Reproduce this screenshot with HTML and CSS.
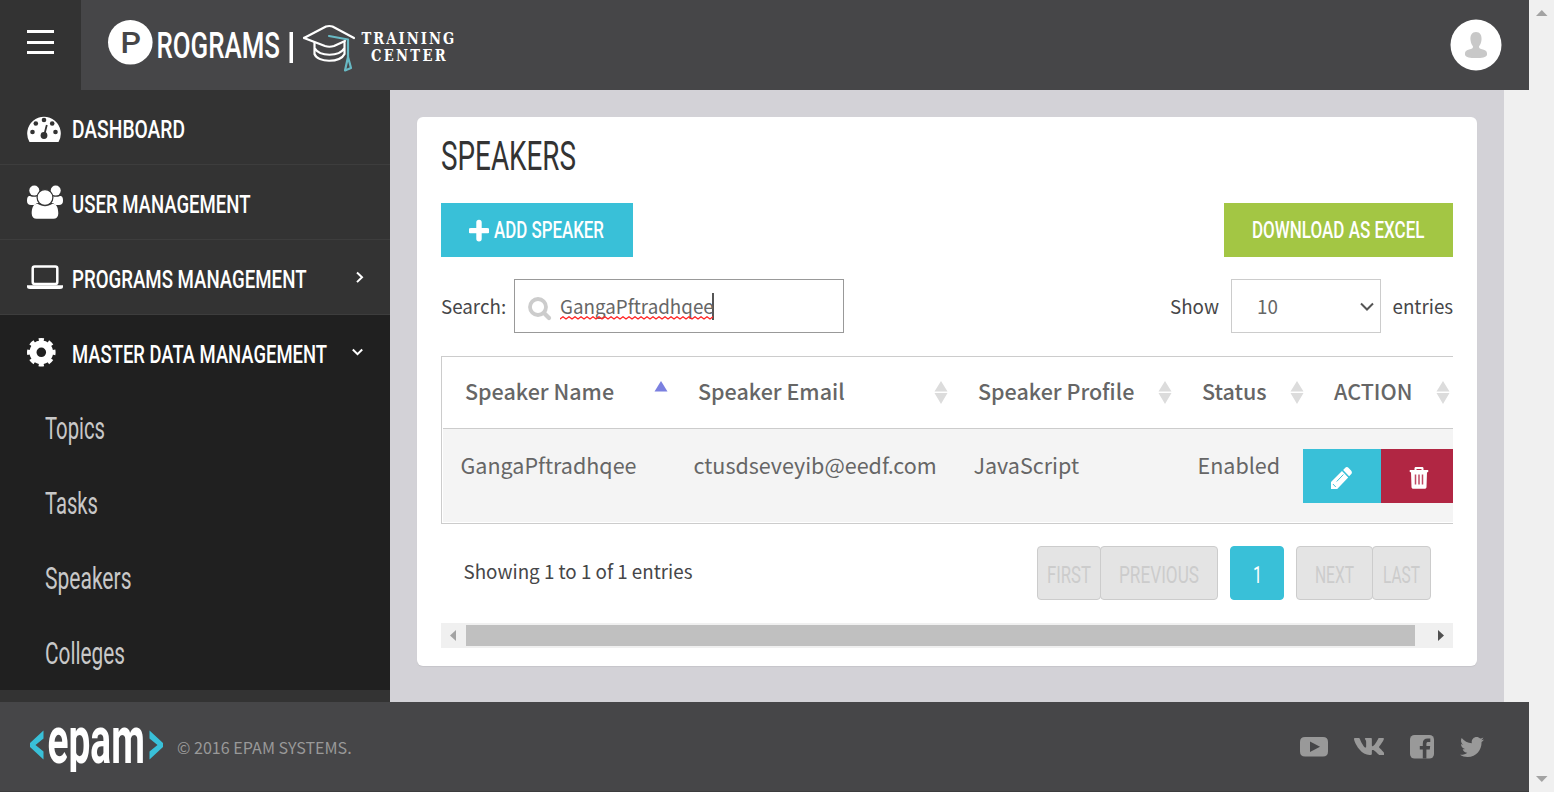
FILE: index.html
```html
<!DOCTYPE html>
<html lang="en">
<head>
<meta charset="utf-8">
<title>Speakers</title>
<link rel="stylesheet" href="styles.css">
</head>
<body>
<div class="page">
  <div class="app">
    <header class="header">
      <button class="burger" aria-label="Menu"><i></i><i></i><i></i></button>
      <svg class="brand" width="360" height="90">
        <circle cx="22.3" cy="42.3" r="22.3" fill="#fff"/>
        <text class="brand-p" x="12.500" y="53" textLength="20.500" lengthAdjust="spacingAndGlyphs">P</text>
        <text class="cond brand-name" x="48.500" y="57.800" textLength="123.500" lengthAdjust="spacingAndGlyphs">ROGRAMS</text>
        <rect x="181.500" y="32" width="3.500" height="31" fill="#fff"/>
        <g fill="none" stroke="#fff" stroke-width="2.200" stroke-linejoin="round" stroke-linecap="round">
          <path d="M196 38 L218 26.500 Q221.300 25.500 224.500 26.500 L246 38 M196 38 L217 46 Q221.300 47.500 226 46 L237 41"/>
          <path d="M206.500 42.500 V54 C210 63 232 63 236.500 54 V42.500 M206.500 48 C212 57 231 57 236.500 48"/>
          <path stroke="#68b9c4" d="M221 36 L240 39.500 V57 L237 70.500 L243 68 L240 57"/>
        </g>
        <text class="slab" transform="translate(253.500 44) scale(.82 1)" textLength="113" lengthAdjust="spacing">TRAINING</text>
        <text class="slab" transform="translate(263 61) scale(.82 1)" textLength="91" lengthAdjust="spacing">CENTER</text>
      </svg>
      <svg class="avatar" width="52" height="52" viewBox="0 0 52 52"><circle cx="26" cy="26" r="25.500" fill="#fff"/><path fill="#c8c8c8" d="M26 13c4 0 6 3 5.500 8-.4 3.500-1.500 5-2.500 6.500 0 2 1 2.500 4 3 3 .6 4.500 2.500 4 5.500-1 2.500-5 3-11 3s-10-.5-11-3c-.5-3 1-4.900 4-5.500 3-.5 4-1 4-3-1-1.500-2.100-3-2.500-6.500-.5-5 1.500-8 5.500-8z"/></svg>
    </header>

    <div class="middle">
      <nav class="sidebar">
        <a class="item">
          <svg class="icon" width="45" height="75"><path fill="#fff" d="M2.500 52 A16.800 16.800 0 1 1 31.500 52 Z"/><g fill="#333"><circle cx="5.500" cy="42" r="2.300"/><circle cx="8.800" cy="33.500" r="2.300"/><circle cx="17" cy="30" r="2.300"/><circle cx="25.200" cy="33.500" r="2.300"/><circle cx="28.500" cy="42" r="2.300"/><circle cx="17" cy="45.500" r="3.400"/></g><path d="M17.200 45 L19.800 35" stroke="#333" stroke-width="1.800"/></svg>
          <svg class="cond" width="113" height="75"><text y="48" textLength="113" lengthAdjust="spacingAndGlyphs">DASHBOARD</text></svg>
        </a>
        <a class="item">
          <svg class="icon" width="45" height="75" fill="#fff"><circle cx="7.300" cy="25.600" r="5"/><circle cx="28.700" cy="25.600" r="5"/><path d="M0 36c0-4 1-5 3-5 2 1 5 1 7 .5 0 3 1 4.500 2 6-2 .5-3.500 1.500-4.500 2.500H4c-2.500 0-4-1.500-4-4zM36 36c0-4-1-5-3-5-2 1-5 1-7 .5 0 3-1 4.500-2 6 2 .5 3.500 1.500 4.500 2.500H32c2.500 0 4-1.500 4-4z"/><circle cx="18" cy="32.500" r="7.900" stroke="#333" stroke-width="1.200"/><path d="M10.500 38.700c5 3.300 10 3.300 15 0 4.500 0 5.800 4.800 5.800 9.800 0 3.500-2 5.200-5 5.200H9.700c-3 0-5-1.700-5-5.200 0-5 1.300-9.800 5.800-9.800z"/></svg>
          <svg class="cond" width="178" height="75"><text y="48" textLength="178.500" lengthAdjust="spacingAndGlyphs">USER MANAGEMENT</text></svg>
        </a>
        <a class="item">
          <svg class="icon" width="45" height="75"><rect x="5.700" y="26.400" width="24.600" height="17.500" rx="2" fill="none" stroke="#fff" stroke-width="2.500"/><path fill="#fff" d="M0 45.300h36v1.500c0 1.500-1 2.200-3 2.200H3c-2 0-3-.7-3-2.200z"/></svg>
          <svg class="cond" width="234" height="75"><text y="48" textLength="234.500" lengthAdjust="spacingAndGlyphs">PROGRAMS MANAGEMENT</text></svg>
          <svg class="caret" width="12" height="75"><path d="M5 32.500l5 4.800-5 4.800"/></svg>
        </a>
        <div class="group">
          <a class="item open">
            <svg class="icon" width="45" height="75"><circle cx="14.300" cy="37.300" r="8.300" fill="none" stroke="#fff" stroke-width="7"/><circle cx="14.300" cy="37.300" r="12.300" fill="none" stroke="#fff" stroke-width="4" pathLength="16" stroke-dasharray="1.050 .95" stroke-dashoffset=".520"/></svg>
            <svg class="cond" width="254" height="75"><text y="48" textLength="255" lengthAdjust="spacingAndGlyphs">MASTER DATA MANAGEMENT</text></svg>
            <svg class="caret" width="12" height="75"><path d="M.8 34.500l4.700 4.700 4.700-4.700"/></svg>
          </a>
          <a class="sub"><svg class="cond" width="60" height="75"><text y="48.500" textLength="60" lengthAdjust="spacingAndGlyphs">Topics</text></svg></a>
          <a class="sub"><svg class="cond" width="53" height="75"><text y="48.500" textLength="53" lengthAdjust="spacingAndGlyphs">Tasks</text></svg></a>
          <a class="sub"><svg class="cond" width="87" height="75"><text y="48.500" textLength="86.500" lengthAdjust="spacingAndGlyphs">Speakers</text></svg></a>
          <a class="sub"><svg class="cond" width="80" height="75"><text y="48.500" textLength="80" lengthAdjust="spacingAndGlyphs">Colleges</text></svg></a>
        </div>
      </nav>

      <main class="main">
        <section class="card">
          <h1 class="title"><svg class="cond" width="135" height="62"><text y="29.400" textLength="135" lengthAdjust="spacingAndGlyphs">SPEAKERS</text></svg></h1>
          <div class="row">
            <button class="btn teal">
              <svg width="20" height="54"><path d="M10 19v18M1 28h18" stroke="#fff" stroke-width="6" stroke-linecap="round" transform="translate(1 2.400) scale(.9)"/></svg>
              <svg class="cond" width="110" height="54"><text y="35" textLength="110" lengthAdjust="spacingAndGlyphs">ADD SPEAKER</text></svg>
            </button>
            <button class="btn green"><svg class="cond" width="172" height="54"><text y="35" textLength="172.500" lengthAdjust="spacingAndGlyphs">DOWNLOAD AS EXCEL</text></svg></button>
          </div>
          <div class="row filters">
            <div class="field"><span class="lbl-search">Search:</span>
              <div class="search">
                <svg class="glass" width="24" height="24"><circle cx="10" cy="10" r="8" fill="none" stroke="#ccc" stroke-width="3.800"/><path d="M16 16l5 5" stroke="#ccc" stroke-width="4.200" stroke-linecap="round"/></svg>
                <span class="typed">GangaPftradhqee<svg class="squiggle" width="153" height="4"><defs><pattern id="wave" width="6" height="4" patternUnits="userSpaceOnUse"><path d="M-1.500 1l1.500 2 3-2.200 3 2.200 1.500-2" fill="none" stroke="#f22" stroke-width="1.400"/></pattern></defs><rect width="153" height="4" fill="url(#wave)"/></svg></span><i class="cursor"></i>
              </div>
            </div>
            <div class="field"><span class="lbl-show">Show</span>
              <div class="select"><span>10</span><svg width="14" height="9"><path d="M1 1.500l6 6 6-6" fill="none" stroke="#555" stroke-width="2"/></svg></div>
              <span class="lbl-entries">entries</span>
            </div>
          </div>
          <div class="grid">
            <div class="cells head">
              <div class="th"><span>Speaker Name</span><svg width="14" height="24"><path fill="#7b80e0" d="M7 1l6.500 10.500H.5z"/></svg></div>
              <div class="th"><span>Speaker Email</span><svg width="14" height="24"><path fill="#dcdcdc" d="M7 1l6.500 10.500H.5zM7 24L.5 13h13z"/></svg></div>
              <div class="th"><span>Speaker Profile</span><svg width="14" height="24"><path fill="#dcdcdc" d="M7 1l6.500 10.500H.5zM7 24L.5 13h13z"/></svg></div>
              <div class="th"><span>Status</span><svg width="14" height="24"><path fill="#dcdcdc" d="M7 1l6.500 10.500H.5zM7 24L.5 13h13z"/></svg></div>
              <div class="th"><span>ACTION</span><svg width="14" height="24"><path fill="#dcdcdc" d="M7 1l6.500 10.500H.5zM7 24L.5 13h13z"/></svg></div>
            </div>
            <div class="cells data">
              <div class="td"><span>GangaPftradhqee</span></div>
              <div class="td"><span>ctusdseveyib@eedf.com</span></div>
              <div class="td"><span>JavaScript</span></div>
              <div class="td"><span>Enabled</span></div>
              <div class="actions">
                <button class="edit" aria-label="Edit"><svg width="21" height="22" viewBox="0 0 22 22" preserveAspectRatio="none"><path fill="#fff" d="M0 22v-7L11.500 4l6.500 6.500L6.500 22zM12.700 3l2-2c1.200-1.200 2.600-1.200 3.800 0l2.500 2.500c1.200 1.200 1.200 2.600 0 3.800l-2 2z"/><path d="M2 17l3 3M6 14.500l7-7" stroke="#39c0d8" stroke-width="1"/></svg></button>
                <button class="del" aria-label="Delete"><svg width="20" height="22" viewBox="0 0 20 22"><path fill="#fff" d="M5.500 3V1.500C5.500.5 6 0 7 0h6c1 0 1.500.5 1.500 1.500V3h4.300c.8 0 .8 2.200 0 2.200H18L17.500 20c0 1-.8 1.800-2 1.800h-11c-1.200 0-2-.8-2-1.800L2 5.200h-.8C.4 5.200.4 3 1.200 3zM7.500 3h5V2h-5z"/><path d="M6.500 7.500v10M10 7.500v10M13.500 7.500v10" stroke="#c04a64" stroke-width="1.500"/></svg></button>
              </div>
            </div>
          </div>
          <div class="row foot">
            <span class="info">Showing 1 to 1 of 1 entries</span>
            <div class="pager">
              <span class="pg first"><svg class="cond" width="44" height="52"><text y="36" textLength="44" lengthAdjust="spacingAndGlyphs">FIRST</text></svg></span>
              <span class="pg prev"><svg class="cond" width="80" height="52"><text y="36" textLength="80" lengthAdjust="spacingAndGlyphs">PREVIOUS</text></svg></span>
              <span class="pg current"><svg class="cond" width="9" height="52"><text y="36" textLength="9" lengthAdjust="spacingAndGlyphs">1</text></svg></span>
              <span class="pg next"><svg class="cond" width="39" height="52"><text y="36" textLength="39" lengthAdjust="spacingAndGlyphs">NEXT</text></svg></span>
              <span class="pg last"><svg class="cond" width="37" height="52"><text y="36" textLength="37" lengthAdjust="spacingAndGlyphs">LAST</text></svg></span>
            </div>
          </div>
          <div class="hscroll">
            <svg width="25" height="25"><path fill="#a3a3a3" d="M15 7v11l-6-5.500z"/></svg>
            <div class="thumb"></div>
            <svg width="25" height="25"><path fill="#505050" d="M10 7v11l6-5.500z"/></svg>
          </div>
        </section>
      </main>
    </div>

    <footer class="footer">
      <svg class="epam" width="134" height="64"><path fill="#39c0d8" d="M13.500 4.500v8L5.500 19l8 6.500v8L0 21v-4zM119.500 4.500v8l8 6.500-8 6.500v8L133 21v-4z"/><text transform="translate(17.500 36.500) scale(.55 1)" textLength="177" lengthAdjust="spacingAndGlyphs">epam</text><rect y="46" width="134" height="18" fill="#464648"/></svg>
      <span class="copy">© 2016 EPAM SYSTEMS.</span>
      <div class="social">
        <svg width="28" height="20"><path fill="#999" fill-rule="evenodd" d="M5 0h18q5 0 5 5v9.500q0 5-5 5H5q-5 0-5-5V5q0-5 5-5zM10 4.500v10.500l10-5.200z"/></svg>
        <svg width="30" height="17" viewBox="18 96 530 320" preserveAspectRatio="none"><path fill="#999" d="M545 117.700c3.700-12.500 0-21.700-17.800-21.700h-58.900c-15 0-21.900 7.900-25.600 16.700 0 0-30 73.100-72.400 120.500-13.700 13.700-20 18.100-27.500 18.100-3.700 0-9.400-4.400-9.400-16.900V117.700c0-15-4.200-21.700-16.600-21.700h-92.600c-9.400 0-15 7-15 13.500 0 14.200 21.200 17.500 23.400 57.500v86.800c0 19-3.400 22.500-10.900 22.500-20 0-68.600-73.400-97.400-157.400-5.800-16.300-11.500-22.900-26.600-22.900H38.800c-16.800 0-20.200 7.900-20.200 16.700 0 15.600 20 93.100 93.100 195.500C160.400 378.100 229 416 291.400 416c37.500 0 42.100-8.400 42.100-22.900 0-66.800-3.400-73.100 15.400-73.100 8.700 0 23.700 4.400 58.700 38.100 40 40 46.600 57.900 69 57.900h58.900c16.800 0 25.300-8.400 20.400-25-11.200-34.900-86.900-106.700-90.300-111.500-8.700-11.200-6.200-16.200 0-26.200.1-.1 72-101.300 79.400-135.600z"/></svg>
        <svg width="24" height="24"><rect width="24" height="23.500" rx="4.500" fill="#999"/><path fill="#464648" d="M12.800 23.500V14.500H9.800V11h3V8.500c0-3.200 1.700-5 5-5h2.500v3.600h-2c-1.300 0-1.900.6-1.900 1.800V11h3.800l-.5 3.500h-3.300v9z"/></svg>
        <svg width="24" height="20" viewBox="0 48 512 416" preserveAspectRatio="none"><path fill="#999" d="M459.370 151.716c.325 4.548.325 9.097.325 13.645 0 138.720-105.583 298.558-298.558 298.558-59.452 0-114.680-17.219-161.137-47.106 8.447.974 16.568 1.299 25.340 1.299 49.055 0 94.213-16.568 130.274-44.832-46.132-.975-84.792-31.188-98.112-72.772 6.498.974 12.995 1.624 19.818 1.624 9.421 0 18.843-1.300 27.614-3.573-48.081-9.747-84.143-51.980-84.143-102.985v-1.299c13.969 7.797 30.214 12.670 47.431 13.319-28.264-18.843-46.781-51.005-46.781-87.391 0-19.492 5.197-37.360 14.294-52.954 51.655 63.675 129.300 105.258 216.365 109.807-1.624-7.797-2.599-15.918-2.599-24.040 0-57.828 46.782-104.934 104.934-104.934 30.213 0 57.502 12.670 76.670 33.137 23.715-4.548 46.456-13.320 66.599-25.340-7.798 24.366-24.366 44.833-46.132 57.827 21.117-2.273 41.584-8.122 60.426-16.243-14.292 20.791-32.161 39.308-52.628 54.253z"/></svg>
      </div>
    </footer>
  </div>
  <div class="vscroll">
    <svg width="25" height="25"><path fill="#a3a3a3" d="M7 16h11.500l-5.700-6z"/></svg>
    <svg width="25" height="25"><path fill="#a3a3a3" d="M7 9h11.500l-5.700 6z"/></svg>
  </div>
</div>
</body>
</html>
```
FILE: styles.css
```css
* { box-sizing: border-box; }
body { margin: 0; background: #f0f0f0; color: #464648; font-family: "Noto Sans CJK SC", "Noto Sans", sans-serif; font-size: 18.8px; overflow: hidden; }
svg { display: block; flex: none; }
button { border: 0; padding: 0; font: inherit; }
.page { display: flex; width: 1554px; height: 792px; }
.app { display: flex; flex-direction: column; width: 1529px; }
.vscroll { display: flex; flex-direction: column; justify-content: space-between; width: 25px; background: #f0f0f0; }

.cond, .cond text { font-family: Roboto, sans-serif; fill: currentColor; }
.cond { overflow: visible; }

.header { display: flex; height: 90px; background: #464648; color: #fff; }
.burger { width: 81px; background: #333; padding: 30px 27px; display: flex; flex-direction: column; gap: 7.5px; }
.burger i { height: 3px; background: #fff; flex: none; width: 27px; }
.brand { margin: 0 auto 0 27px; }
.brand-p { font: 500 30px Roboto, sans-serif; fill: #464648; }
.brand-name { font-size: 36.500px; font-weight: 500; }
.slab { font: 700 16px "DejaVu Serif", serif; fill: #fff; }
.avatar { margin: 19px 27px 0 0; }

.middle { display: flex; height: 612px; }
.sidebar { width: 390px; background: #333; color: #fff; }
.item { display: flex; height: 75px; padding-left: 27px; border-bottom: 1px solid #3d3d3d; font-size: 26.500px; font-weight: 500; }
.item.open { border-bottom: 0; }
.caret { margin: 0 26px 0 auto; fill: none; stroke: #fff; stroke-width: 2; }
.group { background: #202020; height: 375px; }
.sub { display: flex; height: 75px; padding-left: 45px; color: #c8c8c8; font-size: 30.500px; font-weight: 400; }

.main { width: 1114px; background: #d3d2d7; padding: 27px; }
.card { width: 1060px; height: 549px; background: #fff; border-radius: 6px; padding: 24px 24px 0; box-shadow: 0 1px 1px #c6c5ca; }
.title { margin: 0; height: 62px; color: #333; font-size: 40px; font-weight: 400; }
.row { display: flex; justify-content: space-between; }
.btn { display: flex; height: 54px; color: #fff; font-size: 24px; font-weight: 500; }
.teal { width: 192px; padding-left: 28px; gap: 5px; background: #39c0d8; }
.green { width: 229px; padding-left: 28px; background: #a3c644; }
.filters { margin-top: 22px; line-height: 53px; }
.field { display: flex; }
.lbl-search { width: 73px; }
.search { display: flex; width: 330px; height: 54px; border: 1px solid #999; padding-left: 13px; color: #666; line-height: 52px; }
.glass { margin: 17px 8px 0 0; }
.typed { position: relative; width: 152px; }
.squiggle { position: absolute; left: 0; top: 36px; }
.cursor { width: 2px; height: 27px; margin-top: 13px; background: #555; flex: none; }
.lbl-show { width: 61px; }
.select { display: flex; justify-content: space-between; width: 150px; height: 54px; border: 1px solid #ccc; padding: 0 6px 0 25px; color: #666; line-height: 52px; }
.select svg { margin-top: 22px; }
.lbl-entries { width: 72px; padding-left: 11.500px; white-space: nowrap; }

.grid { margin-top: 23px; height: 168px; border: 1px solid #ccc; border-right: 0; padding: 0 0 1px 1px; overflow: hidden; font-size: 21.500px; color: #666; white-space: nowrap; }
.cells { display: grid; grid-template-columns: 233px 280px 224px 132px 146px; }
.head { height: 72px; border-bottom: 1px solid #ccc; line-height: 68px; font-weight: 500; }
.th { display: flex; justify-content: space-between; padding: 0 8px 0 22px; }
.th svg { margin-top: 23px; }
.data { height: 93px; background: #f4f4f4; line-height: 71px; }
.td { padding-left: 17.500px; }
.actions { display: flex; margin: 20px 0 0 -9px; height: 54px; }
.edit { width: 78px; padding: 18px 28px; background: #39c0d8; }
.del { width: 78px; padding: 18px 28px; background: #b12643; }

.foot { margin-top: 22px; padding: 0 22px; height: 54px; }
.info { line-height: 50px; padding-left: .5px; }
.pager { display: flex; font-size: 24px; font-weight: 400; color: #ccc; }
.pg { display: flex; justify-content: center; height: 54px; border: 1px solid #ccc; border-radius: 4px; background: #e4e4e4; }
.first { width: 64px; }
.prev { width: 118px; margin-left: -1px; }
.current { width: 54px; margin: 0 12px; background: #39c0d8; border-color: #39c0d8; color: #fff; }
.next { width: 77px; }
.last { width: 59px; margin-left: -1px; }
.hscroll { display: flex; height: 25px; margin-top: 23px; background: #f0f0f0; }
.thumb { width: 949px; height: 21px; margin: 2px 13px 0 0; background: #c0c0c0; }

.footer { display: flex; height: 90px; background: #464648; padding-left: 29.500px; border-bottom: 1px solid #3c3c3e; }
.epam { margin-top: 24px; }
.epam text { font: 700 67px Roboto, sans-serif; fill: #fff; }
.copy { margin-left: 13.500px; color: #999; font-size: 16.100px; line-height: 90px; white-space: nowrap; }
.social { display: flex; align-items: center; gap: 26px; margin: 0 45px 0 auto; }
```
